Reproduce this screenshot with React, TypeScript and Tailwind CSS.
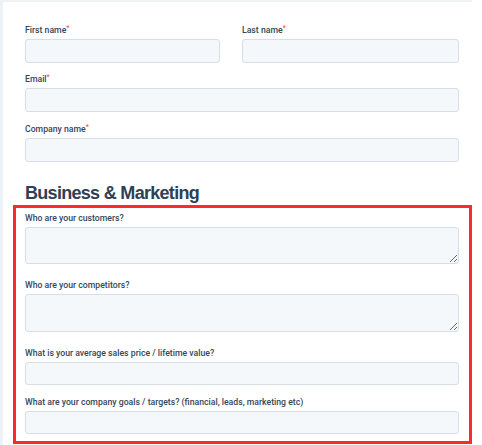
import React from "react";

const font = { fontFamily: '"Liberation Sans", Arial, sans-serif' };
const labelFont = { fontFamily: 'Roboto, "Liberation Sans", Arial, sans-serif' };

function Label({ text, required }: { text: string; required?: boolean }) {
  return (
    <label
      className="block h-[12px] leading-[12px] text-[8.7px] font-medium text-[#33475b] mb-[3px] whitespace-nowrap"
      style={labelFont}
    >
      {text}
      {required && <span className="text-[#f2545b] text-[7px] align-top leading-[9px]">*</span>}
    </label>
  );
}

function Input({ h = "h-[24px]" }: { h?: string }) {
  return (
    <input
      type="text"
      className={`block w-full ${h} bg-[#f5f8fa] border border-[#d6dfe8] rounded-[3px] outline-none`}
    />
  );
}

function Area({ h }: { h: string }) {
  return (
    <textarea
      className={`block w-full ${h} bg-[#f5f8fa] border border-[#d6dfe8] rounded-[3px] outline-none resize-y`}
    />
  );
}

export default function App() {
  return (
    <div className="w-[482px] h-[445px] bg-white overflow-hidden" style={font}>
      <div className="w-[472px] h-[445px] border-l-[3px] border-t-[2px] border-[#edf2f7]">
        <div className="pl-[22px] pr-[13px] pt-[22px]">
          <div className="flex gap-[22px]">
            <div className="w-[195px]">
              <Label text="First name" required />
              <Input />
            </div>
            <div className="flex-1">
              <Label text="Last name" required />
              <Input />
            </div>
          </div>
          <div className="mt-[10px]">
            <Label text="Email" required />
            <Input />
          </div>
          <div className="mt-[11px]">
            <Label text="Company name" required />
            <Input />
          </div>
          <h2 className="mt-[20px] h-[22px] leading-[22px] text-[18px] font-bold tracking-[-0.7px] text-[#2f4055]">
            Business &amp; Marketing
          </h2>
        </div>
        <div className="ml-[10px] mt-[1px] w-[459px] border-[3px] border-[#fe2b22] pl-[9px] pr-[10px] pt-[4px] pb-[7px]">
          <div>
            <Label text="Who are your customers?" />
            <Area h="h-[37px]" />
          </div>
          <div className="mt-[15px]">
            <Label text="Who are your competitors?" />
            <Area h="h-[38px]" />
          </div>
          <div className="mt-[15px]">
            <Label text="What is your average sales price / lifetime value?" />
            <Input h="h-[23px]" />
          </div>
          <div className="mt-[11px]">
            <Label text="What are your company goals / targets? (financial, leads, marketing etc)" />
            <Input h="h-[23px]" />
          </div>
        </div>
      </div>
    </div>
  );
}
